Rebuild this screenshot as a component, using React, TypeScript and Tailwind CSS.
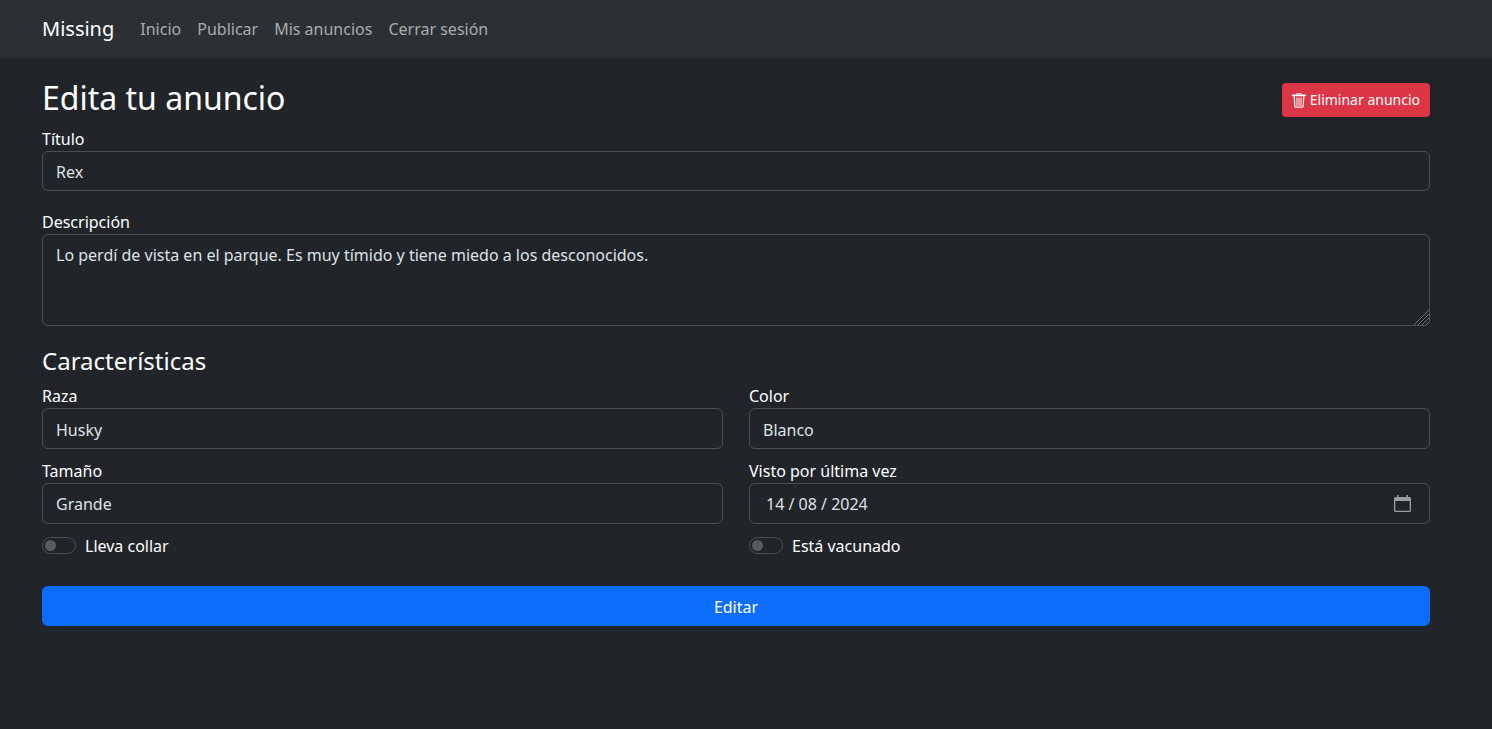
import type { ReactNode } from "react";

const control =
  "block w-full rounded-md border border-[#495057] bg-[#212529] px-[13px] text-base text-[#dee2e6] outline-none focus:border-[#86b7fe]";

const links = ["Inicio", "Publicar", "Mis anuncios", "Cerrar sesión"];

function Field({ id, label, children }: { id: string; label: string; children: ReactNode }) {
  return (
    <div>
      <label htmlFor={id} className="block h-[25px] text-base leading-[27px]">
        {label}
      </label>
      {children}
    </div>
  );
}

function Switch({ id, label }: { id: string; label: string }) {
  return (
    <div className="flex h-[25px] items-center gap-[9px]">
      <input
        id={id}
        type="checkbox"
        role="switch"
        className="flex h-[17px] w-[34px] appearance-none items-center rounded-full border border-[#495057] px-[2px] before:size-[11px] before:rounded-full before:bg-[#585c5f] checked:justify-end checked:border-[#0d6efd] checked:bg-[#0d6efd] checked:before:bg-white"
      />
      <label htmlFor={id} className="h-[25px] text-base leading-[27px]">
        {label}
      </label>
    </div>
  );
}

function TrashIcon() {
  return (
    <svg viewBox="0 0 14 15" className="h-[15px] w-[14px]" fill="none" stroke="currentColor" aria-hidden="true">
      <path d="M4.8 1.600V.7h4.400v.9" strokeWidth="1" />
      <path d="M.7 2.300h12.600" strokeWidth="1.700" strokeLinecap="round" />
      <path d="M2.200 3l.6 10.300q.1.900 1 .9h6.400q.9 0 1-.9L11.800 3" strokeWidth="1.200" />
      <path d="M5 5v7.500M7 5v7.500M9 5v7.500" strokeWidth="1" strokeLinecap="round" />
    </svg>
  );
}

function CalendarIcon() {
  return (
    <svg viewBox="0 0 17 17" className="size-[17px]" fill="#9b9e9f" aria-hidden="true">
      <path
        fillRule="evenodd"
        d="M3 0h1.500v2h8V0H14v2h1.500A1.500 1.500 0 0 1 17 3.500v12a1.500 1.500 0 0 1-1.500 1.500h-14A1.500 1.500 0 0 1 0 15.500v-12A1.500 1.500 0 0 1 1.500 2H3zM1.300 6v9.700h14.400V6z"
      />
    </svg>
  );
}

function ResizeGrip() {
  return (
    <svg
      viewBox="0 0 15 15"
      className="pointer-events-none absolute right-px bottom-px size-[15px]"
      fill="none"
      aria-hidden="true"
    >
      <path d="M1 15L15 1M5 15L15 5M9 15l6-6M13 15l2-2" stroke="#15181a" strokeWidth="1" />
      <path d="M0 15L15 0M4 15L15 4M8 15l7-7M12 15l3-3" stroke="#8c8f91" strokeWidth="0.8" />
    </svg>
  );
}

export default function App() {
  return (
    <div className="min-h-screen bg-[#212529] font-['Noto_Sans',sans-serif] text-white">
      <nav className="flex h-[58px] items-center bg-[#2b3035] pr-[62px] pl-[42px]">
        <a href="#" className="mr-[26px] text-xl">
          Missing
        </a>
        <ul className="flex gap-4">
          {links.map((text) => (
            <li key={text}>
              <a href="#" className="text-base text-[#aaacae] hover:text-white">
                {text}
              </a>
            </li>
          ))}
        </ul>
      </nav>

      <main className="pt-5 pr-[62px] pb-8 pl-[42px]">
        <header className="flex h-[42px] items-start justify-between">
          <h1 className="text-[32px] leading-10">Edita tu anuncio</h1>
          <button
            type="button"
            className="mt-[5px] flex h-[34px] items-center gap-1 rounded bg-[#dc3545] px-[10px] text-sm hover:bg-[#bb2d3b]"
          >
            <TrashIcon />
            Eliminar anuncio
          </button>
        </header>

        <form className="pt-[6px]" onSubmit={(e) => e.preventDefault()}>
          <div className="flex flex-col gap-[18px]">
            <Field id="titulo" label="Título">
              <input id="titulo" type="text" defaultValue="Rex" className={`${control} h-10 pt-[2px]`} />
            </Field>
            <Field id="descripcion" label="Descripción">
              <div className="relative">
                <textarea
                  id="descripcion"
                  defaultValue="Lo perdí de vista en el parque. Es muy tímido y tiene miedo a los desconocidos."
                  className={`${control} h-[92px] resize-y py-2 leading-[25px] [&::-webkit-resizer]:bg-transparent`}
                />
                <ResizeGrip />
              </div>
            </Field>
          </div>

          <h2 className="pt-[19px] pb-[6px] text-2xl leading-8">Características</h2>

          <div className="grid grid-cols-2 gap-x-[26px] gap-y-[9px]">
            <Field id="raza" label="Raza">
              <input id="raza" type="text" defaultValue="Husky" className={`${control} h-[41px] pt-[2px]`} />
            </Field>
            <Field id="color" label="Color">
              <input id="color" type="text" defaultValue="Blanco" className={`${control} h-[41px] pt-[2px]`} />
            </Field>
            <Field id="tamano" label="Tamaño">
              <input id="tamano" type="text" defaultValue="Grande" className={`${control} h-[41px]`} />
            </Field>
            <Field id="fecha" label="Visto por última vez">
              <div className="flex h-[41px] items-center rounded-md border border-[#495057] pr-[18px] pl-4 focus-within:border-[#86b7fe]">
                <input
                  id="fecha"
                  type="text"
                  inputMode="numeric"
                  defaultValue="14 / 08 / 2024"
                  className="min-w-0 flex-1 bg-transparent text-base text-[#dee2e6] outline-none"
                />
                <button type="button" aria-label="Abrir calendario">
                  <CalendarIcon />
                </button>
              </div>
            </Field>
            <Switch id="collar" label="Lleva collar" />
            <Switch id="vacunado" label="Está vacunado" />
          </div>

          <button
            type="submit"
            className="mt-7 h-10 w-full rounded-md bg-[#0d6efd] pt-[2px] text-base hover:bg-[#0b5ed7]"
          >
            Editar
          </button>
        </form>
      </main>
    </div>
  );
}
